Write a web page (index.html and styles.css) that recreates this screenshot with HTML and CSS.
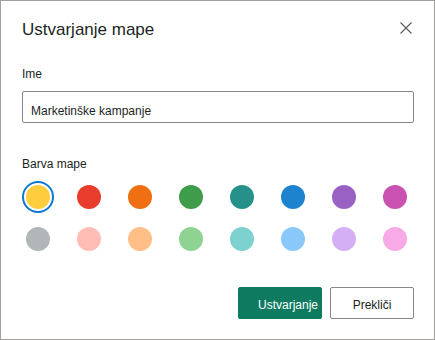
FILE: index.html
```html
<!DOCTYPE html>
<html lang="sl">
<head>
  <meta charset="UTF-8" />
  <meta name="viewport" content="width=device-width, initial-scale=1.0"/>
  <title>Ustvarjanje mape</title>
  <link rel="stylesheet" href="styles.css">
</head>
<body>

<div class="dialog">
  <div class="dialog-header">
    <h1 class="dialog-title">Ustvarjanje mape</h1>
    <button class="close" aria-label="Zapri">
      <svg width="12" height="12" viewBox="0 0 12 12">
        <path d="M0.5 0.5 L11.5 11.5 M11.5 0.5 L0.5 11.5" stroke="#605e5c" stroke-width="1.2" fill="none"/>
      </svg>
    </button>
  </div>

  <label class="field-label" for="name">Ime</label>
  <input id="name" class="text-input" type="text" value="Marketinške kampanje">

  <div class="field-label colors-label">Barva mape</div>
  <div class="swatches">
    <button class="swatch selected"><span style="background:#ffcd3d"></span></button>
    <button class="swatch"><span style="background:#e83c2c"></span></button>
    <button class="swatch"><span style="background:#ef6f12"></span></button>
    <button class="swatch"><span style="background:#3f9c4b"></span></button>
    <button class="swatch"><span style="background:#25918a"></span></button>
    <button class="swatch"><span style="background:#1e83ce"></span></button>
    <button class="swatch"><span style="background:#9a61c5"></span></button>
    <button class="swatch"><span style="background:#ca53b1"></span></button>

    <button class="swatch"><span style="background:#b1b6b8"></span></button>
    <button class="swatch"><span style="background:#ffbdb5"></span></button>
    <button class="swatch"><span style="background:#ffbf87"></span></button>
    <button class="swatch"><span style="background:#8fd393"></span></button>
    <button class="swatch"><span style="background:#7dd1ce"></span></button>
    <button class="swatch"><span style="background:#89c8f8"></span></button>
    <button class="swatch"><span style="background:#d5aff5"></span></button>
    <button class="swatch"><span style="background:#f8aae7"></span></button>
  </div>

  <div class="actions">
    <button class="btn btn-primary">Ustvarjanje</button>
    <button class="btn btn-default">Prekliči</button>
  </div>
</div>

</body>
</html>
```

FILE: styles.css
```css
* {
  box-sizing: border-box;
}

html, body {
  margin: 0;
  background: #fff;
}

body {
  font-family: 'Liberation Sans', Arial, sans-serif;
  font-size: 12px;
  color: #201f1e;
}

.dialog {
  width: 435px;
  height: 340px;
  border: 1px solid #a19f9d;
  padding: 17px 20px 0 21px;
}

.dialog-header {
  display: flex;
  justify-content: space-between;
  align-items: flex-start;
  height: 24px;
}

.dialog-title {
  margin: 0;
  font-size: 17px;
  font-weight: normal;
  line-height: 24px;
}

.close {
  width: 20px;
  height: 20px;
  margin: 0 -2px 0 0;
  padding: 0;
  border: none;
  background: none;
  display: flex;
  justify-content: center;
  align-items: center;
  cursor: pointer;
}

.field-label {
  display: block;
  line-height: 16px;
  margin-top: 24px;
}

.text-input {
  display: block;
  width: 100%;
  height: 32px;
  margin-top: 9px;
  padding: 11px 8px 3px;
  border: 1px solid #8a8886;
  border-radius: 2px;
  font: inherit;
  line-height: 16px;
  color: #201f1e;
  outline: none;
}

.colors-label {
  margin-top: 33px;
}

.swatches {
  display: grid;
  grid-template-columns: repeat(8, 32px);
  column-gap: 19px;
  row-gap: 10px;
  margin-top: 9px;
}

.swatch {
  width: 32px;
  height: 32px;
  padding: 0;
  border: none;
  border-radius: 50%;
  background: none;
  display: flex;
  justify-content: center;
  align-items: center;
  cursor: pointer;
}

.swatch span {
  width: 24px;
  height: 24px;
  border-radius: 50%;
}

.swatch.selected {
  box-shadow: inset 0 0 0 2px #0f78d4;
}

.actions {
  display: flex;
  justify-content: flex-end;
  gap: 8px;
  margin-top: 32px;
}

.btn {
  width: 84px;
  height: 32px;
  padding: 9px 3px 5px;
  border-radius: 2px;
  font: inherit;
  line-height: 16px;
  cursor: pointer;
}

.btn-primary {
  background: #0e7b61;
  border: 1px solid #0e7b61;
  color: #fff;
  text-align: right;
}

.btn-default {
  background: #fff;
  border: 1px solid #8a8886;
  color: #201f1e;
  text-align: center;
}
```
